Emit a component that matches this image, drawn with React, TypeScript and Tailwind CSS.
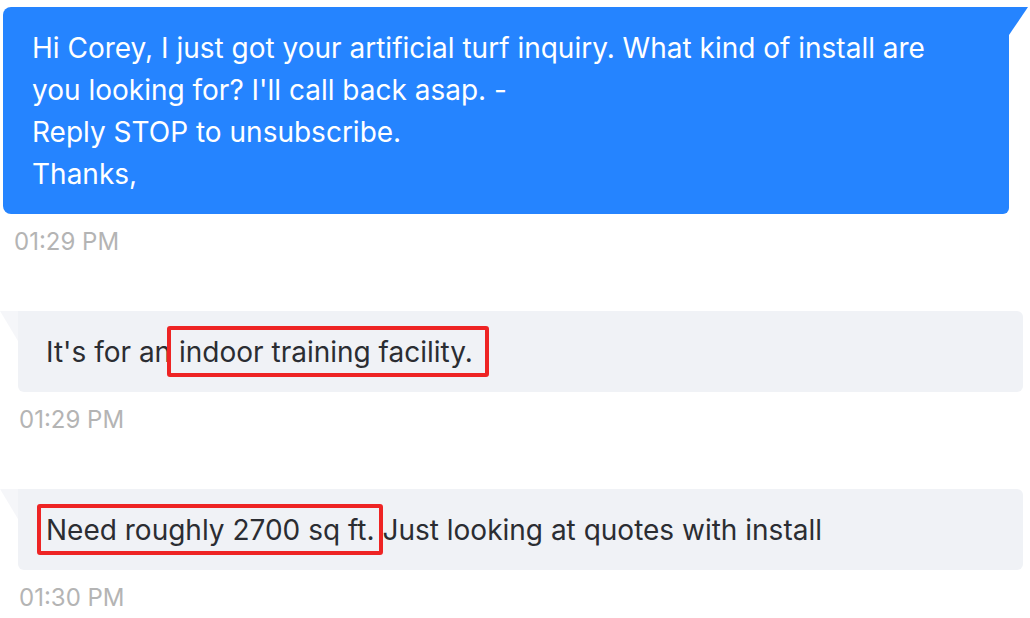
import React from "react";

const font = { fontFamily: "Inter, 'Noto Sans', sans-serif" };

function Mark({ children, l, r, t, b }: { children: React.ReactNode; l: number; r: number; t: number; b: number }) {
  return (
    <span className="relative">
      {children}
      <span
        className="absolute border-[4px] border-[#ee2424] rounded-[3px] pointer-events-none"
        style={{ left: -l, right: -r, top: -t, bottom: -b }}
      />
    </span>
  );
}

function GrayBubble({ children }: { children: React.ReactNode }) {
  return (
    <div className="relative ml-[18px] w-[1005px] h-[81px] bg-[#f0f2f6] rounded-[6px] rounded-tl-none flex items-center pl-[28px] text-[28px] leading-[42px] text-[#2b2d32]">
      <svg className="absolute left-[-18px] top-0" width="18" height="30" viewBox="0 0 18 30">
        <polygon points="0,0 18,0 18,30" fill="#f5f6f9" />
      </svg>
      {children}
    </div>
  );
}

export default function App() {
  return (
    <div className="w-[1030px] h-[618px] bg-white overflow-hidden pt-[7px]" style={font}>
      <div className="relative ml-[3px] w-[1006px] bg-[#2584ff] rounded-[8px] rounded-tr-none rounded-br-[6px] pl-[29px] pt-[20px] pb-[19px] text-white text-[28px] leading-[42px]">
        <svg className="absolute right-[-19px] top-0" width="19" height="28" viewBox="0 0 19 28">
          <polygon points="0,0 19,0 0,28" fill="#2584ff" />
        </svg>
        <div className="whitespace-nowrap">Hi Corey, I just got your artificial turf inquiry. What kind of install are</div>
        <div>you looking for? I'll call back asap. -</div>
        <div>Reply STOP to unsubscribe.</div>
        <div>Thanks,</div>
      </div>
      <div className="ml-[14px] mt-[14px] text-[24px] leading-[28px] text-[#b4b4b4]">01:29 PM</div>

      <div className="mt-[55px]">
        <GrayBubble>
          <span>
            It's for an{" "}
            <Mark l={12} r={16} t={9} b={8}>
              indoor training facility.
            </Mark>
          </span>
        </GrayBubble>
      </div>
      <div className="ml-[19px] mt-[14px] text-[24px] leading-[28px] text-[#b4b4b4]">01:29 PM</div>

      <div className="mt-[55px]">
        <GrayBubble>
          <span>
            <Mark l={9} r={8} t={9} b={8}>
              Need roughly 2700 sq ft.
            </Mark>{" "}
            Just looking at quotes with install
          </span>
        </GrayBubble>
      </div>
      <div className="ml-[19px] mt-[14px] text-[24px] leading-[28px] text-[#b4b4b4]">01:30 PM</div>
    </div>
  );
}
